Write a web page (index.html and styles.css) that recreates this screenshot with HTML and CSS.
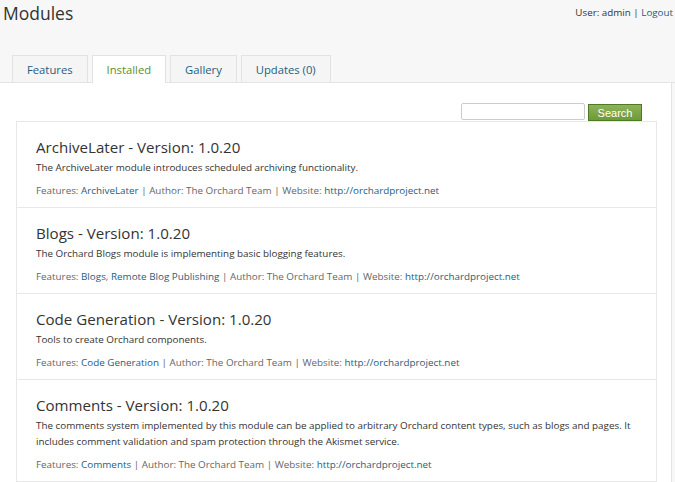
FILE: index.html
```html
<!DOCTYPE html>
<html>
<head>
<meta charset="utf-8">
<link rel="stylesheet" href="styles.css">
</head>
<body>
<header class="top">
  <h1 class="title">Modules</h1>
  <div class="user">User: admin | <a href="#">Logout</a></div>
</header>
<nav class="tabs">
  <a class="tab" href="#">Features</a>
  <a class="tab active" href="#">Installed</a>
  <a class="tab" href="#">Gallery</a>
  <a class="tab" href="#">Updates (0)</a>
</nav>
<main class="panel">
  <form class="search">
    <input class="search-input" type="text">
    <button class="search-btn" type="button">Search</button>
  </form>
  <ul class="modules">
    <li class="module">
      <h2 class="module-title">ArchiveLater - Version: 1.0.20</h2>
      <p class="desc">The ArchiveLater module introduces scheduled archiving functionality.</p>
      <p class="meta">Features: <a href="#">ArchiveLater</a> | Author: The Orchard Team | Website: <a href="#">http://orchardproject.net</a></p>
    </li>
    <li class="module">
      <h2 class="module-title">Blogs - Version: 1.0.20</h2>
      <p class="desc">The Orchard Blogs module is implementing basic blogging features.</p>
      <p class="meta">Features: <a href="#">Blogs</a>, <a href="#">Remote Blog Publishing</a> | Author: The Orchard Team | Website: <a href="#">http://orchardproject.net</a></p>
    </li>
    <li class="module">
      <h2 class="module-title">Code Generation - Version: 1.0.20</h2>
      <p class="desc">Tools to create Orchard components.</p>
      <p class="meta">Features: <a href="#">Code Generation</a> | Author: The Orchard Team | Website: <a href="#">http://orchardproject.net</a></p>
    </li>
    <li class="module">
      <h2 class="module-title">Comments - Version: 1.0.20</h2>
      <p class="desc">The comments system implemented by this module can be applied to arbitrary Orchard content types, such as blogs and pages. It includes comment validation and spam protection through the Akismet service.</p>
      <p class="meta">Features: <a href="#">Comments</a> | Author: The Orchard Team | Website: <a href="#">http://orchardproject.net</a></p>
    </li>
  </ul>
</main>
</body>
</html>
```
FILE: styles.css
```css
html, body {
  margin: 0;
  padding: 0;
}
body {
  background: #f7f7f7;
  font-family: "Open Sans", "Noto Sans", sans-serif;
  color: #333;
  font-size: 10px;
  height: 482px;
  overflow: hidden;
  display: flex;
  flex-direction: column;
}
a {
  color: #1e5d7d;
  text-decoration: none;
}
.top {
  display: flex;
  justify-content: space-between;
  align-items: flex-start;
  height: 54px;
  flex: none;
  padding: 0 2px 0 3px;
}
.title {
  margin: 0;
  padding-top: 1px;
  font-weight: normal;
  font-size: 17.5px;
  line-height: 24px;
  color: #333;
}
.user {
  margin-top: 5px;
  font-size: 9.8px;
  line-height: 16px;
}
.tabs {
  display: flex;
  flex: none;
  gap: 4px;
  padding-left: 12px;
  height: 28px;
  border-bottom: 1px solid #e4e4e4;
}
.tab {
  display: flex;
  align-items: center;
  justify-content: center;
  height: 27px;
  padding: 1px 14px 0;
  box-sizing: border-box;
  margin-top: 1px;
  background: #f5f5f5;
  border: 1px solid #e2e2e2;
  border-bottom: none;
  font-size: 11.25px;
  color: #1e5d7d;
}
.tab.active {
  background: #fff;
  color: #5a8f2a;
  height: 28px;
  padding-top: 0;
  margin-bottom: -1px;
}
.panel {
  background: #fff;
  flex: 1;
  min-height: 0;
  overflow: hidden;
  margin-right: 3px;
  border-right: 1px solid #e4e4e4;
  padding: 20px 14px 0 16px;
}
.search {
  display: flex;
  justify-content: flex-end;
  gap: 3px;
  margin-right: 15px;
  height: 17px;
  margin-bottom: 1px;
}
.search-input {
  width: 124px;
  height: 17px;
  box-sizing: border-box;
  border: 1px solid #ccc;
  border-radius: 2px;
  margin: 0;
  padding: 0;
}
.search-btn {
  width: 54px;
  height: 17px;
  margin-top: 1px;
  box-sizing: border-box;
  border: 1px solid #4e7a21;
  background: linear-gradient(#8db35a, #6e9a38);
  color: #fff;
  font-family: "Liberation Sans", Arial, sans-serif;
  font-size: 11px;
  padding: 0;
}
.modules {
  list-style: none;
  margin: 0;
  padding: 0;
  border: 1px solid #e8e8e8;
}
.module {
  padding: 14px 20px 9px 19px;
  border-top: 1px solid #e8e8e8;
}
.module:first-child {
  border-top: none;
}
.module-title {
  margin: 0;
  font-weight: normal;
  font-size: 15.1px;
  line-height: 22px;
  color: #333;
}
.desc {
  margin: 1px 0 0;
  line-height: 16px;
  font-size: 9.85px;
  color: #333;
}
.meta {
  margin: 7px 0 0;
  line-height: 16px;
  font-size: 9.85px;
  color: #666;
}
```
